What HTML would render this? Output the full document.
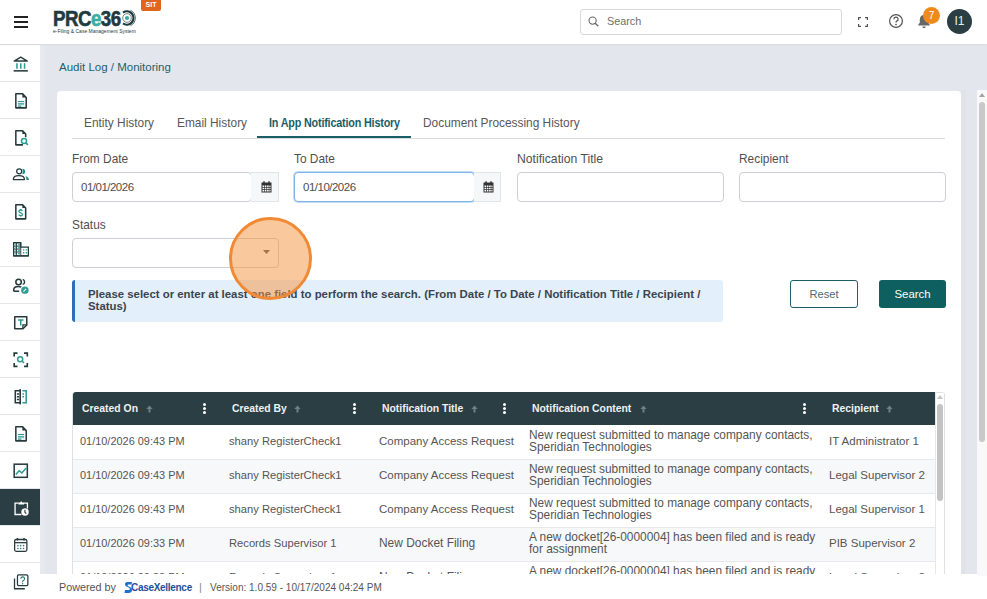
<!DOCTYPE html>
<html><head><meta charset="utf-8">
<style>
*{box-sizing:border-box;margin:0;padding:0}
html,body{width:987px;height:599px;overflow:hidden;background:#e3e7ed;font-family:"Liberation Sans",sans-serif;color:#333}
.abs{position:absolute}
#hdr{position:absolute;left:0;top:0;width:987px;height:44px;background:#fff;box-shadow:0 1px 2px rgba(0,0,0,0.05);z-index:2}
#side{position:absolute;left:0;top:44px;width:40px;height:555px;background:#fff;border-top:1px solid #dde1e6}
.srow{position:absolute;left:0;width:40px;height:37px;border-bottom:1px solid #e4e7eb}
.srow svg{position:absolute;left:11.5px;top:9.5px;width:17.5px;height:17.5px}
#crumb{position:absolute;left:59px;top:61px;font-size:11.5px;color:#1e5f69;white-space:nowrap}
#card{position:absolute;left:57px;top:90.5px;width:903.5px;height:500px;background:#fff;border-radius:4px}
.tab{position:absolute;top:116px;font-size:11.9px;color:#585858;white-space:nowrap}
.lbl{position:absolute;font-size:11.9px;color:#505050;white-space:nowrap}
.inp{position:absolute;height:30px;border:1px solid #ccd0d5;border-radius:4px;background:#fff;font-size:11.5px;letter-spacing:-0.5px;color:#4e4e4e;padding-left:8px;line-height:28px}
.calb{position:absolute;height:30px;background:#f6f7f9;border:1px solid #e1e4e8;border-left:none}
#alert{position:absolute;left:72px;top:280px;width:651px;height:42px;background:#e3f0fb;border-left:3px solid #2d6fb2;border-radius:3px;font-size:11.4px;font-weight:bold;color:#3a4450;padding:7.5px 0 0 13px;line-height:12.6px;white-space:nowrap}
.btn{position:absolute;top:280px;height:28px;border-radius:3px;font-size:11.5px;text-align:center;line-height:26px}
#tbl{position:absolute;left:73px;top:392px;width:871px}
.th{position:absolute;top:392px;height:33px;font-size:10.4px;font-weight:bold;color:#eef1f1;line-height:33px;white-space:nowrap}
.cell{position:absolute;font-size:11.5px;color:#555;line-height:12px;white-space:nowrap}
.c1{font-size:10.95px}.c2{font-size:11.2px}.c3{font-size:11.5px}.c4{font-size:11.9px;line-height:12.4px}.c5{font-size:11.5px}
#foot{position:absolute;left:40px;top:574px;width:947px;height:25px;background:#fff;font-size:11px;color:#444}
</style></head><body>
<div id="hdr">
  <!-- hamburger -->
  <div class="abs" style="left:14px;top:16px;width:14px;height:2px;background:#222"></div>
  <div class="abs" style="left:14px;top:21px;width:14px;height:2px;background:#222"></div>
  <div class="abs" style="left:14px;top:26px;width:14px;height:2px;background:#222"></div>
  <!-- logo -->
  <div class="abs" style="left:52.5px;top:6.5px;font-size:22px;font-weight:bold;letter-spacing:-0.6px;-webkit-text-stroke:0.6px currentColor;color:#1f3b40;line-height:24px;transform:scaleX(0.85);transform-origin:0 0;white-space:nowrap">PRC<span style="color:#3aada3">e</span>36</div>
  <svg class="abs" style="left:117px;top:8px" width="20" height="20" viewBox="0 0 20 20"><circle cx="10" cy="10" r="2.1" fill="#3aada3"/><circle cx="10" cy="10" r="4.3" fill="none" stroke="#54676a" stroke-width="0.8"/><path d="M6 4.6A6.6 6.6 0 1 1 6 15.4" fill="none" stroke="#1f3b40" stroke-width="2.3"/><path d="M13.5 2.3A8.6 8.6 0 0 1 13.5 17.7" fill="none" stroke="#1f3b40" stroke-width="0.8"/></svg>
  <div class="abs" style="left:53px;top:28px;font-size:5px;color:#1f3b40;white-space:nowrap">e-Filing &amp; Case Management System</div>
  <div class="abs" style="left:141px;top:0;width:20px;height:11px;background:#e0661f;border-radius:0 0 2px 2px;color:#fff;font-size:7px;font-weight:bold;text-align:center;line-height:10px">SIT</div>
  <!-- search -->
  <div class="abs" style="left:580px;top:9px;width:262px;height:26px;border:1px solid #d5d8dc;border-radius:3px;background:#fff"></div>
  <svg class="abs" style="left:587.5px;top:15.5px" width="11" height="11" viewBox="0 0 11 11"><circle cx="4.6" cy="4.6" r="3.6" fill="none" stroke="#666" stroke-width="1.1"/><path d="M7.2 7.2L10.3 10.3" stroke="#666" stroke-width="1.3"/></svg>
  <div class="abs" style="left:607px;top:14.5px;font-size:10.8px;color:#6e6e6e">Search</div>
  <!-- fullscreen -->
  <svg class="abs" style="left:857.5px;top:16.5px" width="10" height="10" viewBox="0 0 10 10" fill="none" stroke="#555" stroke-width="1.2"><path d="M.6 3V.6H3M7 .6h2.4V3M9.4 7v2.4H7M3 9.4H.6V7"/></svg>
  <!-- help -->
  <svg class="abs" style="left:888px;top:13px" width="16" height="16" viewBox="0 0 16 16"><circle cx="8" cy="8" r="6.4" fill="none" stroke="#555" stroke-width="1.2"/><path d="M5.9 6.2a2.1 2.1 0 1 1 2.9 1.9c-.6.3-.8.6-.8 1.3" fill="none" stroke="#555" stroke-width="1.25"/><circle cx="8" cy="11.5" r=".85" fill="#555"/></svg>
  <!-- bell -->
  <svg class="abs" style="left:917px;top:14px" width="14" height="15" viewBox="0 0 14 15"><path d="M7 1c-2.5 0-4.2 1.9-4.2 4.4v3.4L1.3 10.6v.8h11.4v-.8L11.2 8.8V5.4C11.2 2.9 9.5 1 7 1z" fill="#666"/><path d="M5.3 12.5a1.7 1.7 0 0 0 3.4 0z" fill="#666"/></svg>
  <div class="abs" style="left:923px;top:7px;width:17px;height:17px;border-radius:50%;background:#ef8a1d;color:#fff;font-size:10px;text-align:center;line-height:17px">7</div>
  <div class="abs" style="left:947px;top:9px;width:25px;height:25px;border-radius:50%;background:#2b3e43;color:#e8eeee;font-size:12px;text-align:center;line-height:25px">I1</div>
</div>

<div id="side">
<div class="srow" style="top:0px;"><svg width="16" height="16" viewBox="0 0 16 16"><path d="M2 5.5L8 2l6 3.5z" fill="none" stroke="#263a3e" stroke-width="1.3" stroke-linejoin="round"/><path d="M4.5 7.5v5M8 7.5v5M11.5 7.5v5" stroke="#2c9c94" stroke-width="1.4"/><path d="M1.5 14.5h13" stroke="#263a3e" stroke-width="1.4"/></svg></div>
<div class="srow" style="top:37px;"><svg width="16" height="16" viewBox="0 0 16 16"><path d="M3.5 1.5h6l3.5 3.5v9.5h-9.5z" fill="none" stroke="#263a3e" stroke-width="1.4" stroke-linejoin="round"/><path d="M9.5 1.5L13 5H9.5z" fill="#263a3e"/><rect x="5" y="7.8" width="6.5" height="5.7" fill="#dff1ef"/><path d="M5.5 8.7h5.5M5.5 10.9h5.5M5.5 12.9h3" stroke="#2c9c94" stroke-width="1.1"/></svg></div>
<div class="srow" style="top:74px;"><svg width="16" height="16" viewBox="0 0 16 16"><path d="M10 14.5H3.5v-13h6l3 3v3" fill="none" stroke="#263a3e" stroke-width="1.4" stroke-linejoin="round"/><path d="M9.5 1.5v3h3z" fill="#263a3e"/><circle cx="11" cy="11" r="2.3" fill="none" stroke="#2c9c94" stroke-width="1.4"/><path d="M12.7 12.7l1.8 1.8" stroke="#2c9c94" stroke-width="1.4"/></svg></div>
<div class="srow" style="top:111px;"><svg width="16" height="16" viewBox="0 0 16 16"><g transform="translate(0,-1.2)"><circle cx="6.6" cy="6.1" r="2.3" fill="none" stroke="#263a3e" stroke-width="1.15"/><path d="M1.2 13.6C1.2 11.2 3.5 10.1 6.3 10.1S11.4 11.2 11.4 13.6z" fill="none" stroke="#263a3e" stroke-width="1.15" stroke-linejoin="round"/><path d="M9.5 3.7A2.5 2.5 0 0 1 9.5 8.7A6 6 0 0 0 9.5 3.7z" fill="#1f8f7f"/><path d="M12.2 10.4C14 10.9 15.4 12 15.6 13.9H13.2C13.2 12.5 12.9 11.4 12.2 10.4z" fill="#1f8f7f"/></g></svg></div>
<div class="srow" style="top:148px;"><svg width="16" height="16" viewBox="0 0 16 16"><path d="M3.5 1.5h6l3 3v10h-9z" fill="none" stroke="#263a3e" stroke-width="1.4" stroke-linejoin="round"/><path d="M9.5 1.5v3h3z" fill="#263a3e"/><path d="M9.5 7.2c-.4-.6-1-.8-1.6-.8-1 0-1.6.5-1.6 1.2 0 1.8 3.3 1 3.3 2.8 0 .7-.7 1.2-1.7 1.2-.7 0-1.3-.3-1.7-.9M8 5.5v1M8 11.5v1" fill="none" stroke="#2c9c94" stroke-width="1.2"/></svg></div>
<div class="srow" style="top:185px;"><svg width="16" height="16" viewBox="0 0 16 16"><path d="M1.5 14.5V2.5h6.5v4h7v8z" fill="none" stroke="#263a3e" stroke-width="1.2"/><path d="M1.5 14.5h13.5" stroke="#263a3e" stroke-width="1.2"/><path d="M3 4.3h1.5M5.7 4.3h1.5M3 7h1.5M5.7 7h1.5M3 9.7h1.5M5.7 9.7h1.5M3 12.4h1.5M5.7 12.4h1.5" stroke="#2c9c94" stroke-width="1.6"/><path d="M4.2 2.5v12M8 2.5v12M1.5 5.6h6.5M1.5 8.3h6.5M1.5 11h6.5" stroke="#263a3e" stroke-width=".8"/><path d="M10 9h1.3M12.5 9h1.3M10 11.7h1.3M12.5 11.7h1.3" stroke="#2c9c94" stroke-width="1.3"/></svg></div>
<div class="srow" style="top:222px;"><svg width="16" height="16" viewBox="0 0 16 16"><circle cx="6" cy="4.5" r="2.5" fill="none" stroke="#263a3e" stroke-width="1.4"/><path d="M1.5 13v-1c0-2 2-3.3 4.5-3.3 1 0 1.8.2 2.5.5" fill="none" stroke="#263a3e" stroke-width="1.4"/><path d="M1.5 13h5" stroke="#263a3e" stroke-width="1.4"/><path d="M9.8 2.2a2.4 2.4 0 0 1 0 4.6" fill="none" stroke="#263a3e" stroke-width="1.3"/><circle cx="11.8" cy="12" r="3.4" fill="#2c9c94"/><path d="M10.5 13.3l2.4-2.4" stroke="#fff" stroke-width="1"/></svg></div>
<div class="srow" style="top:259px;"><svg width="16" height="16" viewBox="0 0 16 16"><path d="M2.5 2.5h11v7.5l-3.5 3.5H2.5z" fill="none" stroke="#263a3e" stroke-width="1.4" stroke-linejoin="round"/><path d="M10 13.5v-3.5h3.5" fill="none" stroke="#263a3e" stroke-width="1.2"/><path d="M5.5 5.5h5M8 5.5v5" stroke="#2c9c94" stroke-width="1.4"/></svg></div>
<div class="srow" style="top:296px;"><svg width="16" height="16" viewBox="0 0 16 16"><path d="M2 5V2h3M11 2h3v3M14 11v3h-3M5 14H2v-3" fill="none" stroke="#263a3e" stroke-width="1.5"/><circle cx="7.5" cy="7.5" r="2.3" fill="none" stroke="#2c9c94" stroke-width="1.4"/><path d="M9.2 9.2l1.8 1.8" stroke="#2c9c94" stroke-width="1.4"/></svg></div>
<div class="srow" style="top:333px;"><svg width="16" height="16" viewBox="0 0 16 16"><path d="M7.5 1v14" stroke="#263a3e" stroke-width="1.5"/><path d="M7.5 2.5H3v11h4.5" fill="none" stroke="#263a3e" stroke-width="1.4"/><path d="M4.5 5.5h2M4.5 8h2M4.5 10.5h2" stroke="#263a3e" stroke-width="1.2"/><path d="M9.5 2.5H13v11H9.5" fill="none" stroke="#2c9c94" stroke-width="1.4"/><path d="M9.5 5.5h1.5M9.5 8h1.5" stroke="#2c9c94" stroke-width="1.2"/></svg></div>
<div class="srow" style="top:370px;"><svg width="16" height="16" viewBox="0 0 16 16"><path d="M3.5 1.5h6l3.5 3.5v9.5h-9.5z" fill="none" stroke="#263a3e" stroke-width="1.4" stroke-linejoin="round"/><path d="M9.5 1.5L13 5H9.5z" fill="#263a3e"/><rect x="5" y="7.8" width="6.5" height="5.7" fill="#dff1ef"/><path d="M5.5 8.7h5.5M5.5 10.9h5.5M5.5 12.9h3" stroke="#2c9c94" stroke-width="1.1"/></svg></div>
<div class="srow" style="top:407px;"><svg width="16" height="16" viewBox="0 0 16 16"><rect x="2" y="2" width="12" height="12" fill="none" stroke="#263a3e" stroke-width="1.4"/><path d="M3.5 11.5l3-3.5 2.5 2 4-4.5" fill="none" stroke="#2c9c94" stroke-width="1.4"/></svg></div>
<div class="srow" style="top:444px;background:#2b3e43;"><svg width="16" height="16" viewBox="0 0 16 16"><path d="M6 3.8H2.8V14.2H8.6M10.8 3.8H14.1V8.6" fill="none" stroke="#fff" stroke-width="1.2"/><path d="M5.9 5V3.2h1.6a.9.9 0 0 1 1.8 0H11V5z" fill="#fff"/><circle cx="11.9" cy="11.9" r="3.4" fill="#fff"/><path d="M11.8 9.8v2.3l1.3 1.2" fill="none" stroke="#2b3e43" stroke-width="1"/></svg></div>
<div class="srow" style="top:481px;"><svg width="16" height="16" viewBox="0 0 16 16"><rect x="2.4" y="3.2" width="11.2" height="10.8" rx="1.4" fill="none" stroke="#263a3e" stroke-width="1.15"/><path d="M2.4 6.1h11.2" stroke="#263a3e" stroke-width="1.15"/><path d="M5 1.8v2.4M11 1.8v2.4" stroke="#263a3e" stroke-width="1.3"/><g fill="#2a7b78"><circle cx="5.4" cy="8.8" r=".7"/><circle cx="8" cy="8.8" r=".7"/><circle cx="10.6" cy="8.8" r=".7"/><circle cx="5.4" cy="11.4" r=".7"/><circle cx="8" cy="11.4" r=".7"/><circle cx="10.6" cy="11.4" r=".7"/></g></svg></div>
<div class="srow" style="top:518px;"><svg width="16" height="16" viewBox="0 0 16 16"><rect x="5" y="1.8" width="9.5" height="9.8" rx="1" fill="none" stroke="#263a3e" stroke-width="1.15"/><path d="M2.3 5v9.4h9.4" fill="none" stroke="#263a3e" stroke-width="1.15"/><path d="M8.1 5.2a1.7 1.7 0 1 1 2.3 1.6c-.5.2-.7.5-.7 1.1v.5" fill="none" stroke="#2a7b78" stroke-width="1.05"/><circle cx="9.7" cy="9.8" r=".65" fill="#2a7b78"/></svg></div>
</div>

<div class="abs" style="left:40px;top:45px;width:5px;height:530px;background:#e6eaef"></div>
<div class="abs" style="left:961px;top:90px;width:5px;height:485px;background:#e0e4e8"></div>
<div id="crumb">Audit Log / Monitoring</div>
<div id="card"></div>

<div class="tab" style="left:84px">Entity History</div>
<div class="tab" style="left:177px">Email History</div>
<div class="tab" style="left:269px;color:#1b5e66;font-weight:bold;font-size:12px;letter-spacing:-0.2px;top:115.5px;transform:scaleX(0.9);transform-origin:0 0">In App Notification History</div>
<div class="tab" style="left:423px">Document Processing History</div>
<div class="abs" style="left:72px;top:138px;width:873px;height:1px;background:#d9dcdf"></div>
<div class="abs" style="left:257px;top:136px;width:154px;height:2px;background:#1b5e66"></div>

<div class="lbl" style="left:72px;top:152px">From Date</div>
<div class="lbl" style="left:294px;top:152px">To Date</div>
<div class="lbl" style="left:517px;top:152px;font-size:12.2px">Notification Title</div>
<div class="lbl" style="left:739px;top:152px">Recipient</div>

<div class="inp" style="left:72px;top:172px;width:180px">01/01/2026</div>
<div class="calb" style="left:251px;top:172px;width:28px"></div>
<div class="inp" style="left:294px;top:172px;width:181px;border-color:#80b3e6;box-shadow:0 0 0 1px #c2dcf5">01/10/2026</div>
<div class="calb" style="left:474px;top:172px;width:27px"></div>
<div class="inp" style="left:517px;top:172px;width:207px"></div>
<div class="inp" style="left:739px;top:172px;width:207px"></div>

<svg class="abs" style="left:260.5px;top:180.5px" width="11" height="12" viewBox="0 0 11 12"><rect x="0.5" y="1.5" width="10" height="10" fill="#333"/><path d="M3 0.3v2.4M8 0.3v2.4" stroke="#333" stroke-width="1.4"/><path d="M1.5 4.6h1.6v1.4H1.5zM3.8 4.6h1.6v1.4H3.8zM6.1 4.6h1.6v1.4H6.1zM8.4 4.6h1.1v1.4H8.4zM1.5 6.7h1.6v1.4H1.5zM3.8 6.7h1.6v1.4H3.8zM6.1 6.7h1.6v1.4H6.1zM8.4 6.7h1.1v1.4H8.4zM1.5 8.8h1.6v1.7H1.5zM3.8 8.8h1.6v1.7H3.8zM6.1 8.8h1.6v1.7H6.1zM8.4 8.8h1.1v1.7H8.4z" fill="#fff"/></svg>
<svg class="abs" style="left:482.5px;top:180.5px" width="11" height="12" viewBox="0 0 11 12"><rect x="0.5" y="1.5" width="10" height="10" fill="#333"/><path d="M3 0.3v2.4M8 0.3v2.4" stroke="#333" stroke-width="1.4"/><path d="M1.5 4.6h1.6v1.4H1.5zM3.8 4.6h1.6v1.4H3.8zM6.1 4.6h1.6v1.4H6.1zM8.4 4.6h1.1v1.4H8.4zM1.5 6.7h1.6v1.4H1.5zM3.8 6.7h1.6v1.4H3.8zM6.1 6.7h1.6v1.4H6.1zM8.4 6.7h1.1v1.4H8.4zM1.5 8.8h1.6v1.7H1.5zM3.8 8.8h1.6v1.7H3.8zM6.1 8.8h1.6v1.7H6.1zM8.4 8.8h1.1v1.7H8.4z" fill="#fff"/></svg>
<div class="lbl" style="left:72px;top:218px">Status</div>
<div class="inp" style="left:72px;top:238px;width:207px"></div>
<svg class="abs" style="left:263px;top:250px" width="7" height="4" viewBox="0 0 7 4"><path d="M0 0h7L3.5 4z" fill="#555"/></svg>

<div id="alert">Please select or enter at least one field to perform the search. (From Date / To Date / Notification Title / Recipient /<br>Status)</div>

<div class="btn" style="left:790px;width:68px;border:1px solid #1b5e66;color:#4a6a6e;background:#fff;font-size:11.1px">Reset</div>
<div class="btn" style="left:879px;width:67px;background:#0e5f5f;color:#fff;font-size:11.4px;line-height:29px">Search</div>

<!-- table -->
<div class="abs" style="left:72px;top:392px;width:873px;height:190px;border:1px solid #dde0e4;border-radius:3px 3px 0 0;background:#fff"></div>
<div class="abs" style="left:73px;top:392px;width:862px;height:33px;background:#2b3e43;border-radius:3px 0 0 0"></div>
<div class="th" style="left:82px">Created On</div>
<svg class="abs" style="left:146px;top:405px" width="7" height="8" viewBox="0 0 7 8"><path d="M3.5 .5L.3 4h2.2v3.5h2V4h2.2z" fill="#6f8084"/></svg>
<div class="abs" style="left:203px;top:403px;width:3px;height:3px;border-radius:50%;background:#fff;box-shadow:0 4px 0 #fff,0 8px 0 #fff"></div>
<div class="th" style="left:232px">Created By</div>
<svg class="abs" style="left:294px;top:405px" width="7" height="8" viewBox="0 0 7 8"><path d="M3.5 .5L.3 4h2.2v3.5h2V4h2.2z" fill="#6f8084"/></svg>
<div class="abs" style="left:353px;top:403px;width:3px;height:3px;border-radius:50%;background:#fff;box-shadow:0 4px 0 #fff,0 8px 0 #fff"></div>
<div class="th" style="left:382px">Notification Title</div>
<svg class="abs" style="left:471px;top:405px" width="7" height="8" viewBox="0 0 7 8"><path d="M3.5 .5L.3 4h2.2v3.5h2V4h2.2z" fill="#6f8084"/></svg>
<div class="abs" style="left:503px;top:403px;width:3px;height:3px;border-radius:50%;background:#fff;box-shadow:0 4px 0 #fff,0 8px 0 #fff"></div>
<div class="th" style="left:532px">Notification Content</div>
<svg class="abs" style="left:640px;top:405px" width="7" height="8" viewBox="0 0 7 8"><path d="M3.5 .5L.3 4h2.2v3.5h2V4h2.2z" fill="#6f8084"/></svg>
<div class="abs" style="left:803px;top:403px;width:3px;height:3px;border-radius:50%;background:#fff;box-shadow:0 4px 0 #fff,0 8px 0 #fff"></div>
<div class="th" style="left:832px">Recipient</div>
<svg class="abs" style="left:886px;top:405px" width="7" height="8" viewBox="0 0 7 8"><path d="M3.5 .5L.3 4h2.2v3.5h2V4h2.2z" fill="#6f8084"/></svg>
<div class="abs" style="left:73px;top:426px;width:862px;height:34px;background:#fff;border-bottom:1px solid #e6e8eb"></div>
<div class="cell c1" style="left:80px;top:435px">01/10/2026 09:43 PM</div>
<div class="cell c2" style="left:229px;top:435px">shany RegisterCheck1</div>
<div class="cell c3" style="left:379px;top:435px">Company Access Request</div>
<div class="cell c4" style="left:529px;top:429px">New request submitted to manage company contacts,<br>Speridian Technologies</div>
<div class="cell c5" style="left:829px;top:435px">IT Administrator 1</div>
<div class="abs" style="left:73px;top:460px;width:862px;height:34px;background:#f7f8fa;border-bottom:1px solid #e6e8eb"></div>
<div class="cell c1" style="left:80px;top:469px">01/10/2026 09:43 PM</div>
<div class="cell c2" style="left:229px;top:469px">shany RegisterCheck1</div>
<div class="cell c3" style="left:379px;top:469px">Company Access Request</div>
<div class="cell c4" style="left:529px;top:463px">New request submitted to manage company contacts,<br>Speridian Technologies</div>
<div class="cell c5" style="left:829px;top:469px">Legal Supervisor 2</div>
<div class="abs" style="left:73px;top:494px;width:862px;height:34px;background:#fff;border-bottom:1px solid #e6e8eb"></div>
<div class="cell c1" style="left:80px;top:503px">01/10/2026 09:43 PM</div>
<div class="cell c2" style="left:229px;top:503px">shany RegisterCheck1</div>
<div class="cell c3" style="left:379px;top:503px">Company Access Request</div>
<div class="cell c4" style="left:529px;top:497px">New request submitted to manage company contacts,<br>Speridian Technologies</div>
<div class="cell c5" style="left:829px;top:503px">Legal Supervisor 1</div>
<div class="abs" style="left:73px;top:528px;width:862px;height:34px;background:#f7f8fa;border-bottom:1px solid #e6e8eb"></div>
<div class="cell c1" style="left:80px;top:537px">01/10/2026 09:33 PM</div>
<div class="cell c2" style="left:229px;top:537px">Records Supervisor 1</div>
<div class="cell c3" style="left:379px;top:537px;font-size:11.95px">New Docket Filing</div>
<div class="cell c4" style="left:529px;top:531px">A new docket[26-0000004] has been filed and is ready<br>for assignment</div>
<div class="cell c5" style="left:829px;top:537px">PIB Supervisor 2</div>
<div class="abs" style="left:73px;top:562px;width:862px;height:34px;background:#fff;border-bottom:1px solid #e6e8eb"></div>
<div class="cell c1" style="left:80px;top:571px">01/10/2026 09:33 PM</div>
<div class="cell c2" style="left:229px;top:571px">Records Supervisor 1</div>
<div class="cell c3" style="left:379px;top:571px;font-size:11.95px">New Docket Filing</div>
<div class="cell c4" style="left:529px;top:565px">A new docket[26-0000004] has been filed and is ready<br>for assignment</div>
<div class="cell c5" style="left:829px;top:571px">Legal Supervisor 2</div>
<div class="abs" style="left:935px;top:393px;width:9px;height:190px;background:#fff;border-left:1px solid #e8e8e8"></div>
<svg class="abs" style="left:936px;top:394px" width="8" height="6" viewBox="0 0 8 6"><path d="M4 1L1 5h6z" fill="#c4c4c4"/></svg>
<div class="abs" style="left:937px;top:404px;width:6px;height:97px;border-radius:3px;background:#c3c3c3"></div>

<div id="foot">
<div class="abs" style="left:19px;top:7px;font-size:10.8px;color:#555">Powered by</div>
<svg class="abs" style="left:84px;top:7px" width="9" height="13" viewBox="0 0 9 13"><path d="M8 1H3.5C1.8 1 1 2 1 3.2c0 1.4 1 2 2.2 2.6L5 6.8c.6.3.8.7.8 1.1 0 .7-.5 1.2-1.3 1.2H1L.5 12h4C6.8 12 8 10.8 8 9c0-1.4-.9-2.3-2.1-2.9L4.3 5.3c-.5-.3-.7-.6-.7-1 0-.5.4-.9 1-.9h3z" fill="#1d6fd0"/></svg>
<div class="abs" style="left:91px;top:7.5px;font-size:10px;font-weight:bold;color:#1f4f9a;letter-spacing:-0.3px">CaseXellence</div>
<div class="abs" style="left:159px;top:7px;font-size:11px;color:#888">|</div>
<div class="abs" style="left:170px;top:8px;font-size:10.04px;color:#555">Version: 1.0.59 - 10/17/2024 04:24 PM</div>
</div>
<!-- page scrollbar -->
<div class="abs" style="left:977px;top:90px;width:10px;height:486px;background:#f9f9f9"></div>
<svg class="abs" style="left:978px;top:92px" width="8" height="6" viewBox="0 0 8 6"><path d="M4 1L1 5h6z" fill="#a3a3a3"/></svg>
<div class="abs" style="left:979px;top:102px;width:6px;height:340px;border-radius:3px;background:#c9c9c9"></div>

<!-- orange circle -->
<div class="abs" style="left:229px;top:216.5px;width:83px;height:83px;border-radius:50%;background:rgba(246,146,60,0.5);border:3px solid #f08a35"></div>
</body></html>
